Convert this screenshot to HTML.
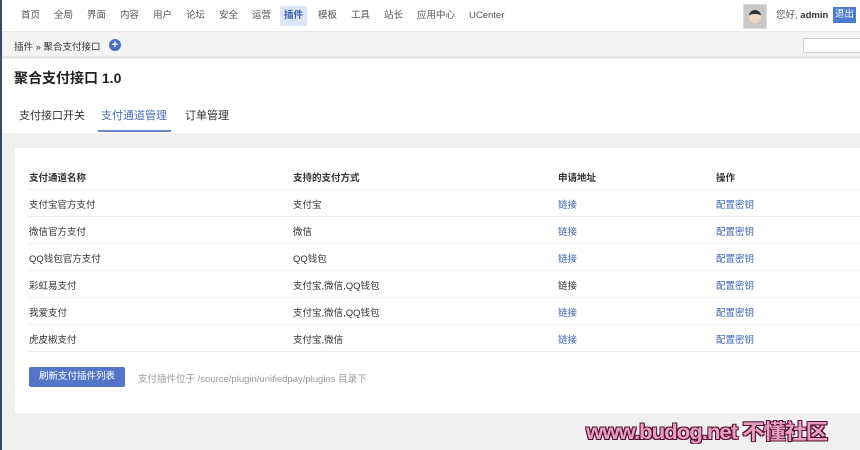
<!DOCTYPE html>
<html><head><meta charset="utf-8"><style>
*{margin:0;padding:0;box-sizing:border-box}
body{width:860px;height:450px;overflow:hidden;background:#f0f0f1;font-family:"Liberation Sans","Noto Sans CJK SC",sans-serif;font-size:10px;color:#333;position:relative}
.nav{position:absolute;left:0;top:0;width:860px;height:32px;background:#fff;border-bottom:1px solid #e8e8e8}
.nav span{position:absolute;top:9px;font-size:9.5px;line-height:14px;color:#555}
.nav .on{background:#dde6f5;color:#3a5fa8;font-weight:bold;padding:3px 4px;top:6px;border-radius:2px}
.crumb{position:absolute;left:0;top:33px;width:860px;height:25px;background:#f4f4f4;border-bottom:2px solid #e3e3e3}
.top{position:absolute;left:0;top:59px;width:860px;height:74px;background:#fff}
.card{position:absolute;left:15px;top:148px;width:845px;height:265px;background:#fff}
.r{position:absolute;left:14px;width:831px;height:27px;border-bottom:1px solid #eee}
.r span{position:absolute;top:7px;font-size:9.5px}
.a{color:#3e64b0}
</style></head><body>
<div class="nav">
<span style="left:21px">首页</span><span style="left:54px">全局</span><span style="left:87px">界面</span><span style="left:120px">内容</span><span style="left:153px">用户</span><span style="left:186px">论坛</span><span style="left:219px">安全</span><span style="left:252px">运营</span><span class="on" style="left:280px">插件</span><span style="left:318px">模板</span><span style="left:351px">工具</span><span style="left:384px">站长</span><span style="left:417px">应用中心</span><span style="left:469px">UCenter</span>
<div style="position:absolute;left:743px;top:4px;width:24px;height:25px;background:#c8c8c8;border:1px solid #ddd"><div style="margin:5px auto 0;width:12px;height:13px;border-radius:6px;background:#f1d8c6;border-top:4px solid #333"></div></div>
<span style="left:776px;color:#555">您好, <b style="color:#333">admin</b></span>
<span style="left:833px;top:7px;background:#4d7bd0;color:#fff;padding:1px 2px">退出</span>
</div>
<div class="crumb">
<span style="position:absolute;left:14px;top:6px;font-size:9.5px">插件 » 聚合支付接口</span>
<div style="position:absolute;left:109px;top:6px;width:12px;height:12px;border-radius:6px;background:#4d6fc0;color:#fff;font-size:11px;line-height:12px;text-align:center;font-weight:bold">+</div>
<div style="position:absolute;left:803px;top:5px;width:60px;height:15px;background:#fff;border:1px solid #ccc;border-radius:2px"></div>
</div>
<div class="top">
<div style="position:absolute;left:14px;top:9px;font-size:14px;font-weight:bold;color:#222">聚合支付接口 1.0</div>
<div style="position:absolute;left:19px;top:48px;font-size:11px">支付接口开关</div>
<div style="position:absolute;left:101px;top:48px;font-size:11px;color:#4a6cb8">支付通道管理</div>
<div style="position:absolute;left:98px;top:71px;width:73px;height:2px;background:#6a88c8"></div>
<div style="position:absolute;left:185px;top:48px;font-size:11px">订单管理</div>
</div>
<div class="card">
<div class="r" style="top:15px"><span style="left:0;font-weight:bold">支付通道名称</span><span style="left:264px;font-weight:bold">支持的支付方式</span><span style="left:529px;font-weight:bold">申请地址</span><span style="left:687px;font-weight:bold">操作</span></div>
<div class="r" style="top:42px"><span style="left:0">支付宝官方支付</span><span style="left:264px">支付宝</span><span class="a" style="left:529px">链接</span><span class="a" style="left:687px">配置密钥</span></div>
<div class="r" style="top:69px"><span style="left:0">微信官方支付</span><span style="left:264px">微信</span><span class="a" style="left:529px">链接</span><span class="a" style="left:687px">配置密钥</span></div>
<div class="r" style="top:96px"><span style="left:0">QQ钱包官方支付</span><span style="left:264px">QQ钱包</span><span class="a" style="left:529px">链接</span><span class="a" style="left:687px">配置密钥</span></div>
<div class="r" style="top:123px"><span style="left:0">彩虹易支付</span><span style="left:264px">支付宝,微信,QQ钱包</span><span style="left:529px">链接</span><span class="a" style="left:687px">配置密钥</span></div>
<div class="r" style="top:150px"><span style="left:0">我爱支付</span><span style="left:264px">支付宝,微信,QQ钱包</span><span class="a" style="left:529px">链接</span><span class="a" style="left:687px">配置密钥</span></div>
<div class="r" style="top:177px"><span style="left:0">虎皮椒支付</span><span style="left:264px">支付宝,微信</span><span class="a" style="left:529px">链接</span><span class="a" style="left:687px">配置密钥</span></div>
<div style="position:absolute;left:14px;top:219px;width:96px;height:20px;background:#5576c8;color:#fff;font-size:9.5px;line-height:20px;text-align:center;border-radius:2px">刷新支付插件列表</div>
<div style="position:absolute;left:123px;top:223px;color:#999;font-size:9.5px">支付插件位于 /source/plugin/unifiedpay/plugins 目录下</div>
</div>
<div style="position:absolute;left:0;top:0;width:2px;height:450px;background:#3a4a6a"></div>
<div style="position:absolute;left:586px;top:416px;font-size:21px;font-weight:bold;color:#e8a0c0;letter-spacing:-1px;transform-origin:0 0;transform:scaleX(1.06);white-space:nowrap;text-shadow:1px 1px 0 #5a1030,-1px -1px 0 #5a1030,1px -1px 0 #5a1030,-1px 1px 0 #5a1030">www.budog.net 不懂社区</div>
</body></html>
